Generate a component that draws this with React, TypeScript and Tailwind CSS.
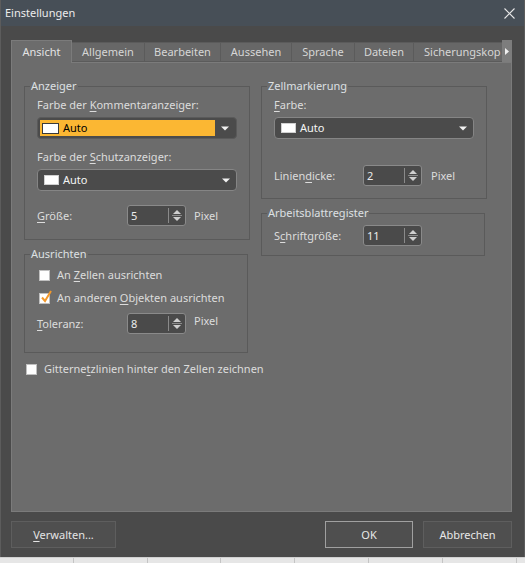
import React from "react";

type LabelProps = { pre?: string; k: string; post?: string };

// label with an underlined access key
function Mn({ pre = "", k, post = "" }: LabelProps) {
  return (
    <span className="whitespace-nowrap">
      {pre}
      <span className="underline underline-offset-2">{k}</span>
      {post}
    </span>
  );
}

function Caret() {
  return (
    <svg width="8" height="5" viewBox="0 0 8 5">
      <path d="M0 0.5 L8 0.5 L4 4.5 Z" fill="#f2f2f2" />
    </svg>
  );
}

function Combo() {
  return (
    <div className="flex h-[22px] w-[200px] items-center rounded-[4px] border border-[#858585] bg-[#4b4b4b] pl-[6px] pr-[6px]">
      <span className="h-[10px] w-[15px] border border-[#d0d0d0] bg-white" />
      <span className="ml-[4px] flex-1 text-[#f4f4f4]">Auto</span>
      <Caret />
    </div>
  );
}

function OrangeCombo() {
  return (
    <div className="flex h-[22px] w-[200px] items-stretch rounded-[4px] border border-[#5a5a5a] bg-[#4b4b4b] p-[2px]">
      <div className="flex flex-1 items-center bg-[#fbb733] pl-[2px]">
        <span className="h-[11px] w-[17px] border border-[#3a3a3a] bg-white" />
        <span className="ml-[4px] text-black">Auto</span>
      </div>
      <div className="flex w-[19px] items-center justify-center">
        <Caret />
      </div>
    </div>
  );
}

function Spin({ value }: { value: string }) {
  return (
    <div className="flex h-[21px] w-[59px] items-center rounded-[3px] border border-[#8a8a8a] bg-[#4a4a4a]">
      <span className="flex-1 pl-[3px] text-[#ececec]">{value}</span>
      <div className="h-[15px] w-px bg-[#8a8a8a]" />
      <div className="flex w-[16px] flex-col items-center justify-center gap-[1px]">
        <svg width="8" height="4" viewBox="0 0 8 4">
          <path d="M0 4 L4 0 L8 4 Z" fill="#cfcfcf" />
        </svg>
        <div className="h-px w-[10px] bg-[#8a8a8a]" />
        <svg width="8" height="4" viewBox="0 0 8 4">
          <path d="M0 0 L8 0 L4 4 Z" fill="#cfcfcf" />
        </svg>
      </div>
    </div>
  );
}

function Check({ checked = false }: { checked?: boolean }) {
  return (
    <span className="relative inline-block h-[11px] w-[11px] shrink-0 border border-[#c0c0c0] bg-white">
      {checked && (
        <svg className="absolute -top-[4px] left-[1px]" width="11" height="13" viewBox="0 0 11 13">
          <path d="M1 7.5 L4 11 L10 1" fill="none" stroke="#f3982a" strokeWidth="2" />
        </svg>
      )}
    </span>
  );
}

function Group({ title, className = "", children }: { title: string; className?: string; children: React.ReactNode }) {
  return (
    <fieldset className={`w-[224px] border border-[#5a5a5a] px-[5px] ${className}`}>
      <legend className="px-[1px] leading-[16px] text-[#dde0e3]">{title}</legend>
      <div className="px-[7px]">{children}</div>
    </fieldset>
  );
}

const tabs = [
  { label: "Allgemein", w: "w-[73px]" },
  { label: "Bearbeiten", w: "w-[76px]" },
  { label: "Aussehen", w: "w-[71px]" },
  { label: "Sprache", w: "w-[63px]" },
  { label: "Dateien", w: "w-[59px]" },
];

export default function App() {
  return (
    <div className="flex h-[563px] w-[525px] flex-col bg-[#e6e6e6] font-['Noto_Sans',sans-serif] text-[11px] leading-[16px] text-[#dcdcdc]">
      <div className="flex h-[557px] flex-col border-x border-[#5c5c5c] bg-[#4a4a4a]">
        {/* title bar */}
        <div className="flex h-[26px] items-center justify-between bg-[#474f57] pl-[4px] pr-[9px]">
          <span className="text-[#ececec]">Einstellungen</span>
          <svg width="11" height="11" viewBox="0 0 11 11">
            <path d="M0.5 0.5 L10.5 10.5 M10.5 0.5 L0.5 10.5" stroke="#e8e8e8" strokeWidth="1.1" />
          </svg>
        </div>

        <div className="flex flex-1 flex-col pl-[10px] pr-[12px] pt-[14px]">
          {/* tabs */}
          <div className="flex h-[22px] items-end">
            <div className="relative z-10 -mb-px flex h-[23px] w-[61px] items-center justify-center border border-b-0 border-[#7b7b7b] bg-[#6c6c6c] text-[#e4e4e4]">
              Ansicht
            </div>
            {tabs.map((t) => (
              <div
                key={t.label}
                className={`flex h-[20px] ${t.w} items-center justify-center border-y border-r border-[#5b5b5b] bg-[#676767] text-[#d6d6d6]`}
              >
                {t.label}
              </div>
            ))}
            <div className="flex h-[20px] w-[88px] items-center overflow-hidden whitespace-nowrap border-y border-[#5b5b5b] bg-[#676767] pl-[10px] text-[#d6d6d6]">
              Sicherungskop
            </div>
            <div className="flex h-[22px] w-[10px] items-center justify-center bg-[#7d7d7d]">
              <svg width="4" height="7" viewBox="0 0 4 7">
                <path d="M0 0 L4 3.5 L0 7 Z" fill="#f0f0f0" />
              </svg>
            </div>
          </div>

          {/* panel */}
          <div className="flex h-[450px] flex-col border border-[#7b7b7b] bg-[#6c6c6c] pl-[12px] pt-[15px]">
            <div className="flex items-start gap-[13px]">
              <div className="flex w-[224px] flex-col">
                <Group title="Anzeiger" className="pb-[13px]">
                  <div className="mt-[3px]">
                    <Mn pre="Farbe der " k="K" post="ommentaranzeiger:" />
                  </div>
                  <div className="mt-[4px]">
                    <OrangeCombo />
                  </div>
                  <div className="mt-[10px]">
                    <Mn pre="Farbe der " k="S" post="chutzanzeiger:" />
                  </div>
                  <div className="mt-[4px]">
                    <Combo />
                  </div>
                  <div className="mt-[14px] flex items-center">
                    <span className="w-[90px]">
                      <Mn k="G" post="röße:" />
                    </span>
                    <Spin value="5" />
                    <span className="ml-[8px]">Pixel</span>
                  </div>
                </Group>

                <Group title="Ausrichten" className="mt-[6px] pb-[18px]">
                  <div className="mt-[5px] flex items-center gap-[7px] pl-[2px]">
                    <Check />
                    <Mn pre="An " k="Z" post="ellen ausrichten" />
                  </div>
                  <div className="mt-[7px] flex items-center gap-[7px] pl-[2px]">
                    <Check checked />
                    <Mn pre="An anderen " k="O" post="bjekten ausrichten" />
                  </div>
                  <div className="mt-[7px] flex items-center">
                    <span className="w-[90px]">
                      <Mn k="T" post="oleranz:" />
                    </span>
                    <Spin value="8" />
                    <span className="mb-[5px] ml-[8px]">Pixel</span>
                  </div>
                </Group>

                <div className="mt-[8px] flex items-center gap-[7px] whitespace-nowrap pl-[2px]">
                  <Check />
                  <Mn pre="Gitterne" k="t" post="zlinien hinter den Zellen zeichnen" />
                </div>
              </div>

              <div className="flex w-[224px] flex-col">
                <Group title="Zellmarkierung" className="pb-[12px]">
                  <div className="mt-[3px]">
                    <Mn k="F" post="arbe:" />
                  </div>
                  <div className="mt-[4px]">
                    <Combo />
                  </div>
                  <div className="mt-[26px] flex items-center">
                    <span className="w-[89px]">
                      <Mn pre="Linien" k="d" post="icke:" />
                    </span>
                    <Spin value="2" />
                    <span className="ml-[9px]">Pixel</span>
                  </div>
                </Group>

                <Group title="Arbeitsblattregister" className="mt-[6px] pb-[9px]">
                  <div className="mt-[4px] flex items-center">
                    <span className="w-[89px]">
                      <Mn pre="S" k="c" post="hriftgröße:" />
                    </span>
                    <Spin value="11" />
                  </div>
                </Group>
              </div>
            </div>
          </div>

          {/* buttons */}
          <div className="mt-[9px] flex h-[27px] items-stretch">
            <button className="w-[105px] border border-[#5e5e5e] bg-[#4f4f4f] text-[#e4e4e4]">
              <Mn k="V" post="erwalten..." />
            </button>
            <div className="flex-1" />
            <button className="w-[88px] border border-[#a0a0a0] bg-[#4f4f4f] text-[#e8e8e8]">OK</button>
            <button className="ml-[10px] w-[89px] border border-[#5e5e5e] bg-[#4f4f4f] text-[#e8e8e8]">
              Abbrechen
            </button>
          </div>
        </div>
      </div>

      {/* spreadsheet behind */}
      <div className="flex flex-1 border-t border-[#d0d0d0]">
        {[0, 1, 2, 3, 4, 5, 6].map((i) => (
          <div key={i} className="w-[73.8px] border-r border-[#c4c4c4]" />
        ))}
      </div>
    </div>
  );
}
